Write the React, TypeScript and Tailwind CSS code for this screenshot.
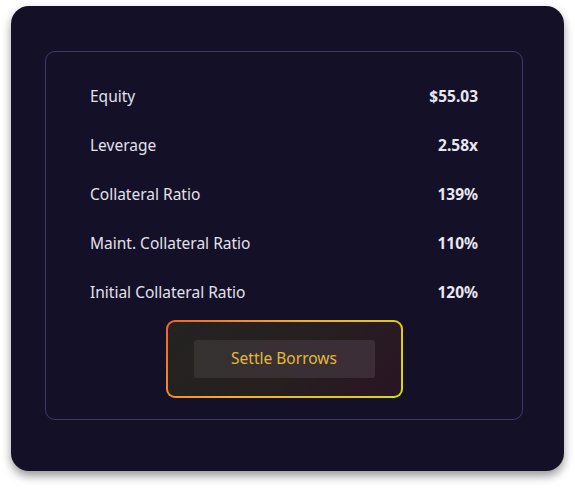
import React from 'react';

const rows = [
  { label: 'Equity', value: '$55.03' },
  { label: 'Leverage', value: '2.58x' },
  { label: 'Collateral Ratio', value: '139%' },
  { label: 'Maint. Collateral Ratio', value: '110%' },
  { label: 'Initial Collateral Ratio', value: '120%' },
];

export default function App() {
  return (
    <div className="w-[575px] h-[488px] bg-white pt-[6px] pl-[11px]" style={{ fontFamily: '"Noto Sans", "Open Sans", sans-serif' }}>
      <div className="w-[553px] h-[465px] rounded-[18px] bg-[#131027] pt-[45px] pl-[34px] shadow-[0_5px_10px_rgba(0,0,0,0.4)]">
        <div className="w-[478px] h-[369px] rounded-[10px] border border-[#40386a] px-[44px] pt-[20px] flex flex-col">
          {rows.map((r) => (
            <div key={r.label} className="h-[49px] flex items-center justify-between text-[15.5px]">
              <span className="text-[#e3e1ec]">{r.label}</span>
              <span className="font-bold text-[#e8e6f0]">{r.value}</span>
            </div>
          ))}
          <div className="mt-[3px] flex justify-center">
            <div className="w-[237px] h-[78px] rounded-[9px] p-[2px] bg-[linear-gradient(135deg,#f5602a,#f8b018_45%,#d2dc10)]">
              <div className="w-full h-full rounded-[7px] bg-[linear-gradient(135deg,#242321,#26201f_50%,#2a1424)] flex items-center justify-center">
                <button className="w-[181px] h-[38px] rounded-[3px] bg-[linear-gradient(90deg,#353230,#3c2d37)] text-[15.5px] text-[#e4b83a]">
                  Settle Borrows
                </button>
              </div>
            </div>
          </div>
        </div>
      </div>
    </div>
  );
}
